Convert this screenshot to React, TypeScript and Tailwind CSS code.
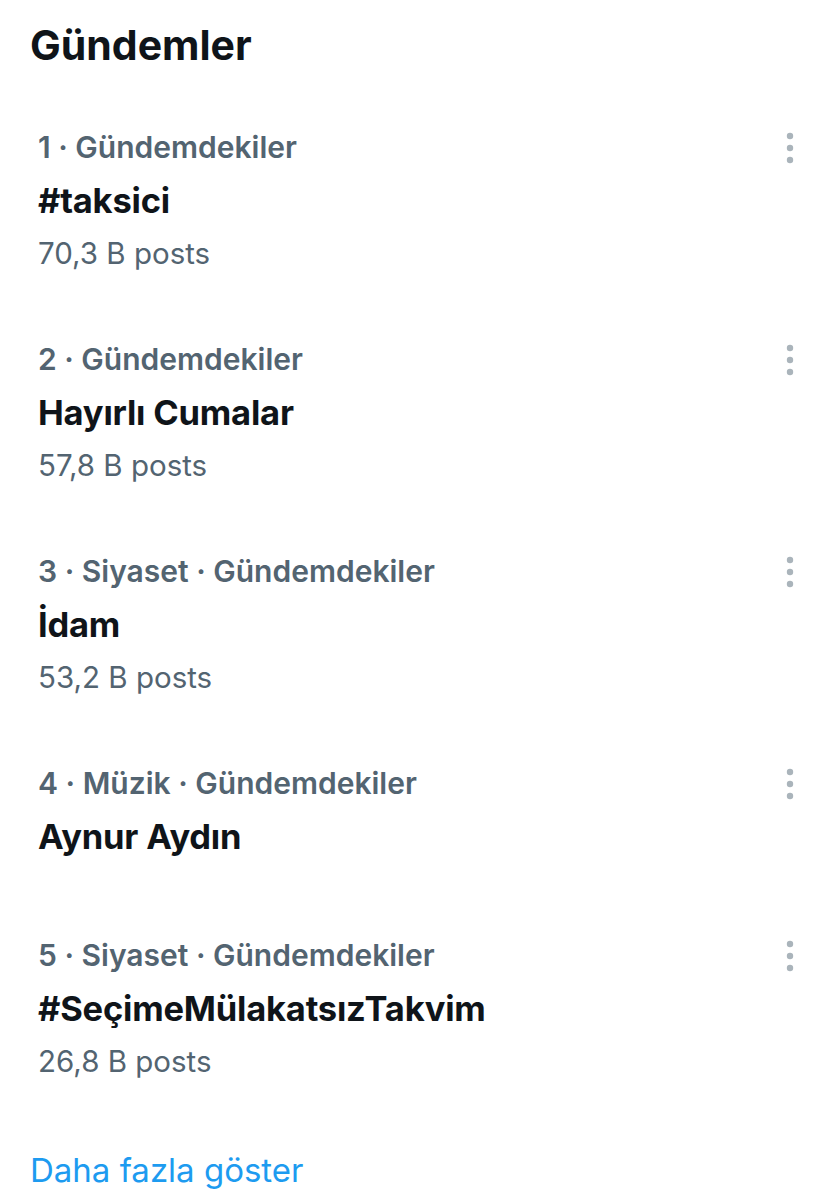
const TRENDS = [
  { meta: "1 · Gündemdekiler", name: "#taksici", posts: "70,3 B posts" },
  { meta: "2 · Gündemdekiler", name: "Hayırlı Cumalar", posts: "57,8 B posts" },
  { meta: "3 · Siyaset · Gündemdekiler", name: "İdam", posts: "53,2 B posts" },
  { meta: "4 · Müzik · Gündemdekiler", name: "Aynur Aydın", posts: null },
  { meta: "5 · Siyaset · Gündemdekiler", name: "#SeçimeMülakatsızTakvim", posts: "26,8 B posts" },
];

function MoreDots() {
  return (
    <svg width="12" height="32" viewBox="0 0 12 32" className="shrink-0 text-[#aab4bb]">
      <circle cx="6" cy="4" r="3.2" fill="currentColor" />
      <circle cx="6" cy="16" r="3.2" fill="currentColor" />
      <circle cx="6" cy="28" r="3.2" fill="currentColor" />
    </svg>
  );
}

function TrendRow({ meta, name, posts }: { meta: string; name: string; posts: string | null }) {
  return (
    <div className={`flex items-start justify-between pl-[38px] pr-[40px] ${posts ? "pb-[53px]" : "pb-[66px]"}`}>
      <div className="min-w-0">
        <div className="text-[30px] font-semibold leading-[53px] text-[#536471]">{meta}</div>
        <div className="text-[34.5px] font-bold leading-[53px] tracking-[-0.2px] text-[#0f1419]">{name}</div>
        {posts && <div className="text-[29.5px] leading-[53px] text-[#536471]">{posts}</div>}
      </div>
      <div className="pt-[11px]">
        <MoreDots />
      </div>
    </div>
  );
}

export default function App() {
  return (
    <div className="min-h-[1200px] w-[836px] bg-white font-['Inter',sans-serif]">
      <h1 className="pl-[30px] pt-[19px] pb-[49px] text-[41px] font-bold leading-[53px] text-[#0f1419]">Gündemler</h1>
      {TRENDS.map((t) => (
        <TrendRow key={t.meta} {...t} />
      ))}
      <div className="pl-[30px] pt-[3px] text-[33px] leading-[53px] text-[#1d9bf0]">Daha fazla göster</div>
    </div>
  );
}
